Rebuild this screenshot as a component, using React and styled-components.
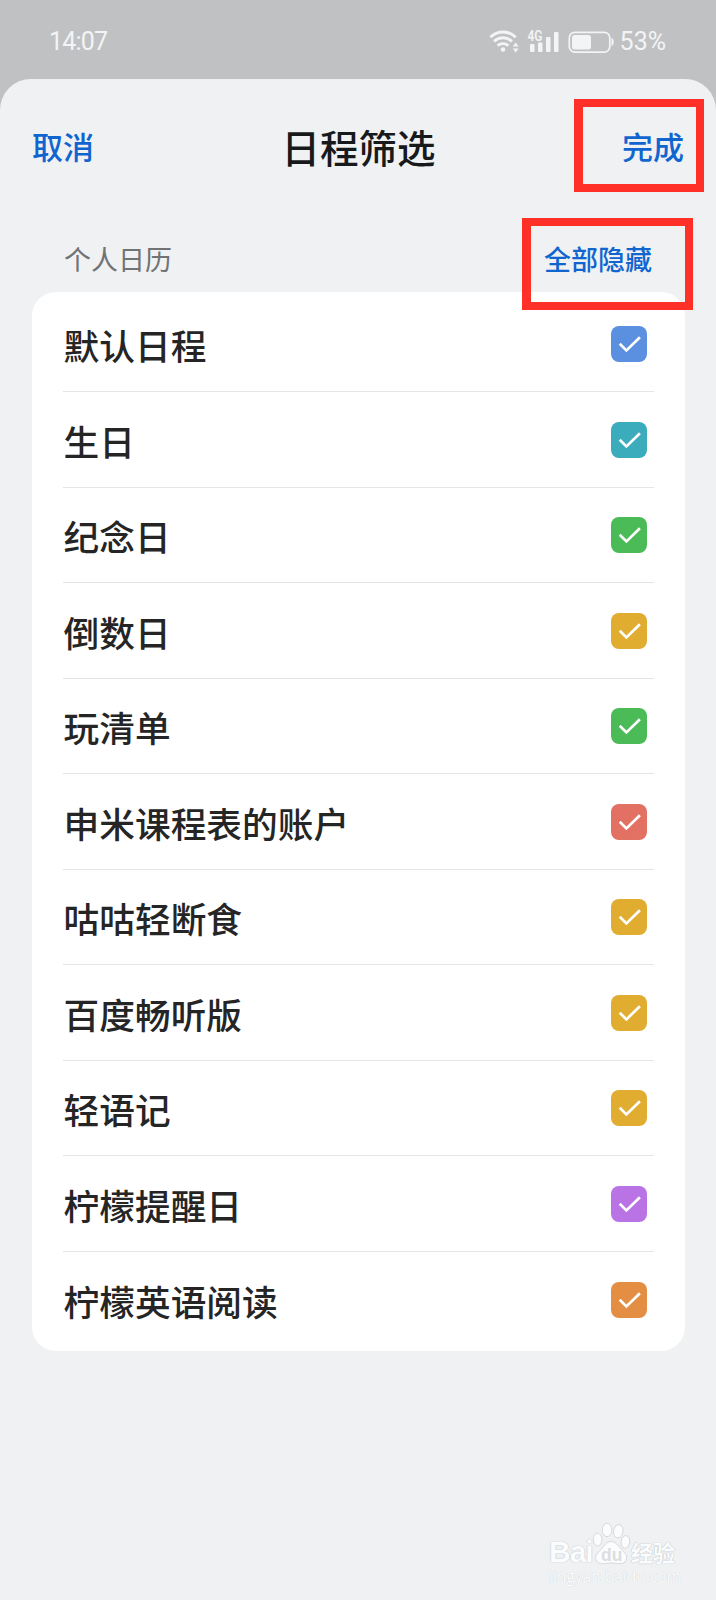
import styled, { createGlobalStyle } from "styled-components";

const GlobalStyle = createGlobalStyle`
* {
  box-sizing: border-box;
}
body {
  margin: 0;
  background: #c0c1c3;
}
`;
const Page = styled.div`
position: relative;
display: flex;
flex-direction: column;
width: 716px;
height: 1600px;
overflow: hidden;
background: #c0c1c3;
font-family: "Noto Sans CJK SC", "Noto Sans", sans-serif;
`;
const StatusBar = styled.div`
display: flex;
justify-content: space-between;
align-items: center;
height: 79px;
padding: 4px 50px 0 49px;
color: #f3f4f5;
font-family: Roboto, sans-serif;
font-size: 25px;
`;
const Clock = styled.div`
line-height: 30px;
letter-spacing: -0.8px;
`;
const StatusIcons = styled.div`
display: flex;
align-items: center;
`;
const StatusSvg = styled.svg`
display: block;
margin: -2px 5px 0 0;
`;
const Sheet = styled.div`
flex: 1;
background: #eff1f3;
border-radius: 31px 31px 0 0;
`;
const Header = styled.div`
display: flex;
justify-content: space-between;
align-items: center;
height: 136px;
padding: 0 32px 3px;
`;
const Title = styled.div`
padding-left: 1px;
font-size: 38.5px;
font-weight: 500;
line-height: 48px;
color: #17191b;
`;
const TextButton = styled.button`
margin: 0;
padding: 0;
border: none;
background: none;
font-family: inherit;
font-weight: 500;
font-size: ${({ $size }) => $size}px;
line-height: 40px;
color: #1065cf;
`;
const SectionHead = styled.div`
display: flex;
justify-content: space-between;
align-items: center;
height: 77px;
padding: 11px 64px 0;
`;
const SectionTitle = styled.div`
font-size: 27px;
line-height: 40px;
color: #707274;
`;
const Card = styled.div`
height: 1059px;
margin: 0 31.5px 0 32px;
padding: 4.6px 31px 0;
border-radius: 24px;
background: #ffffff;
`;
const Row = styled.div`
display: flex;
justify-content: space-between;
align-items: center;
height: 95.5px;
padding-right: 6.5px;
border-bottom: 1px solid #e4e5e7;
&:last-child {
  border-bottom: none;
}
`;
const RowName = styled.div`
padding: 3px 0 0 0.6px;
font-size: 35.7px;
font-weight: 500;
line-height: 48px;
color: #252525;
`;
const Check = styled.div`
display: flex;
width: 36px;
height: 36px;
margin-top: 0.6px;
border-radius: 8px;
background: ${({ $color }) => $color};
`;
const Highlight = styled.div`
position: absolute;
border: 8.5px solid #fe3028;
border-left-width: 9px;
left: ${({ $x }) => $x}px;
top: ${({ $y }) => $y}px;
width: ${({ $w }) => $w}px;
height: ${({ $h }) => $h}px;
`;
const Watermark = styled.div`
position: absolute;
right: 37px;
bottom: 14px;
width: 130px;
color: #fbfcfd;
font-family: "Open Sans", sans-serif;
`;
const Brand = styled.div`
display: flex;
align-items: flex-end;
height: 44px;
font-weight: 700;
text-shadow: 0 0 1px #b9bcc0, 0 0 1px #c9ccd0;
`;
const BrandLatin = styled.span`
width: 43px;
font-family: "Liberation Sans", sans-serif;
font-size: 30px;
line-height: 27px;
letter-spacing: -1px;
`;
const PawSvg = styled.svg`
overflow: visible;
text-shadow: none;
`;
const BrandHan = styled.span`
margin-left: 3px;
padding-bottom: 1px;
font-family: "Noto Sans CJK SC", sans-serif;
font-size: 22px;
line-height: 25px;
white-space: nowrap;
`;
const Site = styled.div`
padding-top: 1px;
font-size: 15.5px;
line-height: 20px;
white-space: nowrap;
text-shadow: 0 0 1px #c4c7cb;
`;

const calendars = [
  { name: "默认日程", color: "#5b90e0" },
  { name: "生日", color: "#3aacbc" },
  { name: "纪念日", color: "#4abb57" },
  { name: "倒数日", color: "#e0ad30" },
  { name: "玩清单", color: "#4abb57" },
  { name: "申米课程表的账户", color: "#e27063" },
  { name: "咕咕轻断食", color: "#e0ad30" },
  { name: "百度畅听版", color: "#e0ad30" },
  { name: "轻语记", color: "#e0ad30" },
  { name: "柠檬提醒日", color: "#b973e4" },
  { name: "柠檬英语阅读", color: "#e48e44" },
];

const StatusSymbols = () => (
  <StatusSvg width="126" height="26" viewBox="0 0 126 26" fill="none">
    {/* wifi */}
    <g stroke="#f3f4f5" strokeWidth="2.9">
      <path d="M1.3 9.2C8.5 2.2 19.5 2.2 26.7 9.2" />
      <path d="M5 13.4C10.3 8.6 17.7 8.6 23 13.4" />
      <path d="M8.6 17.6C11.7 15 16.3 15 19.4 17.6" />
    </g>
    <circle cx="14" cy="21.5" r="2.3" fill="#f3f4f5" />
    <path d="M26.7 14.5l3 4h-6zM26.7 24.5l3-4h-6z" fill="#f3f4f5" />
    {/* signal */}
    <g fill="#f3f4f5">
      <rect x="41" y="16" width="4.5" height="8" rx="1" />
      <rect x="49" y="14.5" width="4.5" height="9.5" rx="1" />
      <rect x="57" y="9" width="4.5" height="15" rx="1" />
      <rect x="65" y="4" width="4.5" height="20" rx="1" />
    </g>
    <text x="38.5" y="13" fontSize="14" fontWeight="600" fontFamily="Roboto" fill="#f3f4f5" textLength="15" lengthAdjust="spacingAndGlyphs">4G</text>
    {/* battery */}
    <rect x="80.3" y="4.3" width="40.5" height="19.8" rx="5.5" stroke="#f3f4f5" strokeWidth="1.7" />
    <rect x="83" y="7" width="19" height="14.4" rx="2.5" fill="#f3f4f5" />
    <path d="M123 10.5c1.6.5 1.6 6.5 0 7z" fill="#f3f4f5" stroke="#f3f4f5" />
  </StatusSvg>
);

const Paw = () => (
  <PawSvg width="36" height="44" viewBox="0 0 36 44" fill="#fbfcfd" stroke="#d3d5d8" strokeWidth="0.9">
    <ellipse cx="5.6" cy="18.5" rx="4.3" ry="6.4" />
    <ellipse cx="15" cy="9" rx="4.8" ry="6.7" />
    <ellipse cx="26.3" cy="10.3" rx="4.7" ry="6.7" transform="rotate(8 26.3 10.3)" />
    <ellipse cx="33.4" cy="21" rx="4.3" ry="6.4" transform="rotate(8 33.4 21)" />
    <path d="M19 20.500c4.500 0 7 4 10 7.500 4 4 7 7 5 11.500-2.500 5-9 2.500-15 2.500s-12 2.500-14.500-2c-2.500-5 1-8 5-12 3-3.500 5-7.500 9.500-7.500z" />
    <text x="9" y="39.500" fontSize="17.500" fontWeight="700" fontFamily="Liberation Sans" fill="#dcdee1" stroke="none">du</text>
  </PawSvg>
);

const CalendarRow = ({ name, color }) => {
  return (
    <Row>
      <RowName>{name}</RowName>
      <Check $color={color}>
        <svg width="36" height="36" viewBox="0 0 36 36" fill="none">
          <path d="M8.7 17.8L15.4 24.4L28.9 11.2" stroke="#ffffff" strokeWidth="2.7" />
        </svg>
      </Check>
    </Row>
  );
};

const App = () => {
  return (
    <Page>
      <GlobalStyle />
      <StatusBar>
        <Clock>14:07</Clock>
        <StatusIcons>
          <StatusSymbols />
          <span>53%</span>
        </StatusIcons>
      </StatusBar>
      <Sheet>
        <Header>
          <TextButton $size={31}>取消</TextButton>
          <Title>日程筛选</Title>
          <TextButton $size={31}>完成</TextButton>
        </Header>
        <SectionHead>
          <SectionTitle>个人日历</SectionTitle>
          <TextButton $size={27}>全部隐藏</TextButton>
        </SectionHead>
        <Card>
          {calendars.map((item) => (
            <CalendarRow key={item.name} name={item.name} color={item.color} />
          ))}
        </Card>
      </Sheet>
      <Highlight $x={574} $y={99} $w={129.5} $h={93} />
      <Highlight $x={522} $y={218} $w={171} $h={91.5} />
      <Watermark>
        <Brand>
          <BrandLatin>Bai</BrandLatin>
          <Paw />
          <BrandHan>经验</BrandHan>
        </Brand>
        <Site>jingyan.baidu.com</Site>
      </Watermark>
    </Page>
  );
};

export default App;
